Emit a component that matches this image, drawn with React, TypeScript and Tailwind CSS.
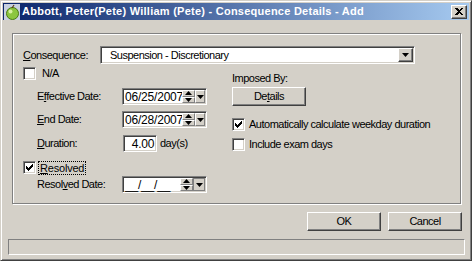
import React from "react";

const font = { fontFamily: '"Liberation Sans", Arial, sans-serif' };

function Sunken({ className = "", children }: { className?: string; children?: React.ReactNode }) {
  return (
    <div
      className={`border border-t-[#808080] border-l-[#808080] border-b-white border-r-white shadow-[inset_1px_1px_0_#404040,inset_-1px_-1px_0_#d4d0c8] ${className}`}
    >
      {children}
    </div>
  );
}

function Raised({ className = "", children }: { className?: string; children?: React.ReactNode }) {
  return (
    <div
      className={`border border-t-white border-l-white border-b-[#404040] border-r-[#404040] shadow-[inset_-1px_-1px_0_#808080] bg-[#d4d0c8] ${className}`}
    >
      {children}
    </div>
  );
}

function DownArrow() {
  return (
    <svg width="7" height="4" viewBox="0 0 7 4">
      <path d="M0 0H7L3.5 4Z" fill="#000" />
    </svg>
  );
}

function Check() {
  return (
    <svg width="7" height="7" viewBox="0 0 7 7" shapeRendering="crispEdges">
      <path d="M6 0h1v3h-1v1h-1v1h-1v1h-1v1h-1v-1h-1v-1h-1v-3h1v1h1v1h1v-1h1v-1h1z" fill="#000" />
    </svg>
  );
}

function CheckBox({ checked }: { checked?: boolean }) {
  return (
    <Sunken className="w-[13px] h-[13px] bg-white flex items-center justify-center shrink-0">
      {checked ? <Check /> : null}
    </Sunken>
  );
}

function Spin() {
  return (
    <div className="w-[13px] h-full flex flex-col shrink-0">
      <div className="flex-1 bg-[#d4d0c8] border border-t-white border-l-white border-b-[#808080] border-r-[#808080] flex items-center justify-center">
        <svg width="7" height="4" viewBox="0 0 7 4">
          <path d="M3.5 0L7 4H0Z" fill="#000" />
        </svg>
      </div>
      <div className="flex-1 bg-[#d4d0c8] border border-t-white border-l-white border-b-[#808080] border-r-[#808080] flex items-center justify-center">
        <svg width="7" height="4" viewBox="0 0 7 4">
          <path d="M0 0H7L3.5 4Z" fill="#000" />
        </svg>
      </div>
    </div>
  );
}

function DateBox({ value, pressed }: { value: string; pressed?: boolean }) {
  return (
    <Sunken className="w-[85px] h-[17px] bg-white flex p-[1px]">
      <div className="w-[58px] h-full flex items-center pl-[1px] text-[12px] leading-none tracking-[-0.2px]">
        {value}
      </div>
      <Spin />
      <div
        className={`w-[12px] h-full flex items-center justify-center ${
          pressed
            ? "bg-[#d4d0c8] border border-[#808080]"
            : "bg-[#d4d0c8] border border-t-white border-l-white border-b-[#808080] border-r-[#808080]"
        }`}
      >
        <svg width="7" height="4" viewBox="0 0 7 4">
          <path d="M0 0H7L3.5 4Z" fill="#000" />
        </svg>
      </div>
    </Sunken>
  );
}

export default function App() {
  return (
    <div style={font} className="w-[472px] h-[261px] bg-[#d4d0c8] text-black text-[11px] tracking-[-0.5px]">
      <div className="w-full h-full border border-t-[#d4d0c8] border-l-[#d4d0c8] border-b-[#404040] border-r-[#404040] shadow-[inset_1px_1px_0_white,inset_-1px_-1px_0_#808080] p-[2px] flex flex-col">
        {/* Title bar */}
        <div className="h-[17px] flex items-center bg-[linear-gradient(to_right,#0a246a,#a6caf0)] shrink-0">
          <div className="w-[16px] h-[16px] ml-[1px] mr-[2px] flex items-center justify-center">
            <svg width="16" height="16" viewBox="0 0 16 16">
              <rect x="0" y="0" width="16" height="16" fill="#c8d0e0" />
              <circle cx="8.5" cy="9.5" r="6" fill="#8cc63f" stroke="#4a7a10" strokeWidth="1" />
              <circle cx="6.5" cy="7.5" r="2" fill="#d8f0a0" />
              <path d="M8 4 L10 1" stroke="#5a3a10" strokeWidth="1.2" />
            </svg>
          </div>
          <span className="text-white font-bold text-[11px] tracking-[0.25px] whitespace-nowrap">
            Abbott, Peter(Pete) William (Pete) - Consequence Details - Add
          </span>
          <div className="flex-1" />
          <Raised className="w-[16px] h-[14px] mr-[2px] flex items-center justify-center">
            <svg width="8" height="7" viewBox="0 0 8 7" shapeRendering="crispEdges">
              <path d="M0 0h2l2 2l2 -2h2l-3 3.5l3 3.5h-2l-2 -2l-2 2h-2l3 -3.5z" fill="#000" />
            </svg>
          </Raised>
        </div>

        {/* Group box */}
        <div className="ml-[9px] mt-[13px] w-[449px] h-[171px] border border-[#808080] shadow-[inset_1px_1px_0_white,1px_1px_0_white] shrink-0 flex flex-col">
          <div className="mt-[12px] ml-[10px] flex items-center h-[18px]">
            <div className="w-[77px]">
              <span className="underline">C</span>onsequence:
            </div>
            <Sunken className="w-[315px] h-[18px] bg-white flex items-center">
              <div className="flex-1 pl-[9px]">Suspension - Discretionary</div>
              <Raised className="w-[15px] h-[14px] mr-[1px] flex items-center justify-center">
                <DownArrow />
              </Raised>
            </Sunken>
          </div>

          <div className="flex ml-[10px] mt-[1px]">
            {/* left column */}
            <div className="w-[209px] flex flex-col">
              <div className="h-[14px] mt-[1px] flex items-center gap-[6px]">
                <CheckBox />
                <span>N/A</span>
              </div>
              <div className="mt-[8px] h-[17px] flex items-center">
                <div className="w-[99px] pl-[14px]">
                  E<span className="underline">f</span>fective Date:
                </div>
                <DateBox value="06/25/2007" />
              </div>
              <div className="mt-[6px] h-[17px] flex items-center">
                <div className="w-[99px] pl-[14px]">
                  <span className="underline">E</span>nd Date:
                </div>
                <DateBox value="06/28/2007" />
              </div>
              <div className="mt-[7px] h-[17px] flex items-center">
                <div className="w-[100px] pl-[14px]">
                  <span className="underline">D</span>uration:
                </div>
                <Sunken className="w-[34px] h-[17px] bg-white flex items-center justify-end pr-[2px] text-[12px] tracking-[-0.3px]">
                  4.00
                </Sunken>
                <span className="ml-[3px]">day(s)</span>
              </div>
              <div className="mt-[8px] h-[15px] flex items-center gap-[2px]">
                <CheckBox checked />
                <span className="border border-dotted border-black px-[1px] leading-[12px] tracking-[-0.2px]">
                  <span className="underline">R</span>esolved
                </span>
              </div>
              <div className="mt-[1px] h-[17px] flex items-center">
                <div className="w-[99px] pl-[14px]">
                  Resol<span className="underline">v</span>ed Date:
                </div>
                <DateBox value="__/__/__" pressed />
              </div>
            </div>

            {/* right column */}
            <div className="flex flex-col">
              <div className="mt-[7px] h-[12px] leading-[12px]">Imposed By:</div>
              <Raised className="mt-[3px] w-[74px] h-[19px] flex items-center justify-center">
                <span>
                  De<span className="underline">t</span>ails
                </span>
              </Raised>
              <div className="mt-[12px] h-[13px] flex items-center gap-[4px]">
                <CheckBox checked />
                <span>Automatically calculate weekday duration</span>
              </div>
              <div className="mt-[7px] h-[13px] flex items-center gap-[4px]">
                <CheckBox />
                <span>Include exam days</span>
              </div>
            </div>
          </div>
        </div>

        {/* Buttons */}
        <div className="mt-[8px] flex justify-end gap-[7px] mr-[7px] shrink-0">
          <Raised className="w-[74px] h-[19px] flex items-center justify-center">OK</Raised>
          <Raised className="w-[74px] h-[19px] flex items-center justify-center">Cancel</Raised>
        </div>

        {/* Status bar */}
        <div className="mt-[8px] ml-[5px] w-[457px] h-[16px] border border-t-[#808080] border-l-[#808080] border-b-white border-r-white shrink-0" />
      </div>
    </div>
  );
}
